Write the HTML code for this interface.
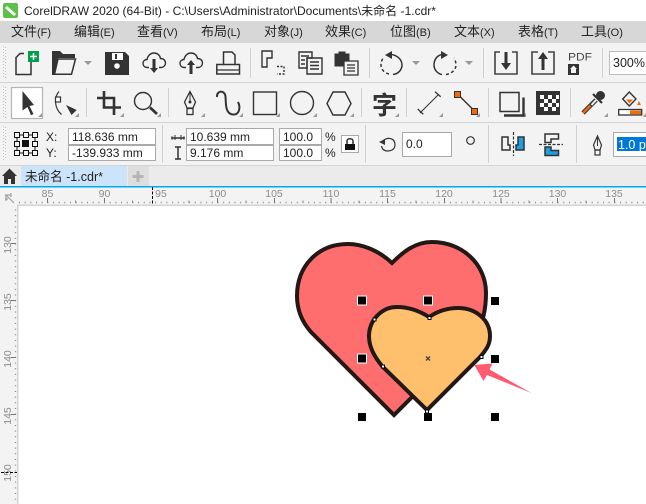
<!DOCTYPE html>
<html><head><meta charset="utf-8"><style>
html,body{margin:0;padding:0;background:#fff;overflow:hidden}
svg{display:block}
text{font-family:"Liberation Sans","Noto Sans CJK SC",sans-serif;fill:#222}
</style></head><body>
<svg width="646" height="504" viewBox="0 0 646 504" xmlns="http://www.w3.org/2000/svg">
<rect width="646" height="504" fill="#fff"/>
<!-- title -->
<rect x="3" y="3" width="15" height="15" rx="2" fill="#5cc04a"/>
<path d="M7 6l9 8-2 2-9-8z" fill="#fff"/>
<text x="24" y="15" font-size="12" textLength="412" lengthAdjust="spacingAndGlyphs" fill="#111">CorelDRAW 2020 (64-Bit) - C:\Users\Administrator\Documents\未命名 -1.cdr*</text>
<!-- menu -->
<rect y="21" width="646" height="22" fill="#d7d7d7"/>
<g font-size="13" fill="#111">
<text x="11" y="36">文件<tspan font-size="11">(F)</tspan></text>
<text x="74" y="36">编辑<tspan font-size="11">(E)</tspan></text>
<text x="137" y="36">查看<tspan font-size="11">(V)</tspan></text>
<text x="201" y="36">布局<tspan font-size="11">(L)</tspan></text>
<text x="264" y="36">对象<tspan font-size="11">(J)</tspan></text>
<text x="325" y="36">效果<tspan font-size="11">(C)</tspan></text>
<text x="390" y="36">位图<tspan font-size="11">(B)</tspan></text>
<text x="454" y="36">文本<tspan font-size="11">(X)</tspan></text>
<text x="518" y="36">表格<tspan font-size="11">(T)</tspan></text>
<text x="581" y="36">工具<tspan font-size="11">(O)</tspan></text>
</g>
<!-- bars -->
<rect y="43" width="646" height="122" fill="#f3f3f3"/>
<rect y="82" width="646" height="1" fill="#d4d4d4"/>
<rect y="122" width="646" height="1" fill="#d4d4d4"/>
<rect y="165" width="646" height="1" fill="#d4d4d4"/>
<g stroke="#c4c4c4" stroke-dasharray="1 2" stroke-width="1">
<path d="M3.500 46V78M5.500 47V78M3.500 86V118M5.500 87V118M3.500 126V160M5.500 127V160"/>
</g>
<g stroke="#d0d0d0" stroke-width="1">
<path d="M250.500 48V78M369.500 48V78M483.500 48V78M602.500 48V78"/>
<path d="M86.500 88V117M168.500 88V117M361.500 88V117M406.500 88V117M488.500 88V117M570.500 88V117"/>
<path d="M162.500 125V163M365.500 125V163M488.500 125V163M576.500 125V163"/>
</g>
<!-- toolbar1 icons -->
<g fill="none" stroke="#333" stroke-width="1.500">
<path d="M24 53.500H20L16 57.500V74.500H31V62"/>
</g>
<rect x="28" y="51" width="11" height="11" fill="#00a04a"/>
<path d="M33.500 53V60M30 56.500H37" stroke="#fff" stroke-width="1.500"/>
<path d="M52 75V51H60L63 54H75V58H58L54 75Z" fill="#333"/>
<path d="M58 59H75.500L71.500 74.200H54.500Z" fill="none" stroke="#333" stroke-width="1.500"/>
<path d="M84 61H92L88 65Z" fill="#999"/>
<path d="M105 52H125L129 56V75H105Z" fill="#333"/>
<rect x="112" y="53" width="11" height="7" fill="#fff"/><rect x="115" y="54" width="2" height="5" fill="#333"/>
<circle cx="117" cy="66" r="2.800" fill="#fff"/>
<g fill="none" stroke="#333" stroke-width="1.400">
<path d="M149 67.500H147C144 67.500 143 65 143 63C143 61 145 59.500 147 59.500C148 55 151 53 154 53C157 53 160 55 160.500 58.500C163.500 58.500 165.500 60.500 165.500 63C165.500 65.500 163.500 67.500 161 67.500H159"/>
<path d="M186 67.500H184C181 67.500 180 65 180 63C180 61 182 59.500 184 59.500C185 55 188 53 191 53C194 53 197 55 197.500 58.500C200.500 58.500 202.500 60.500 202.500 63C202.500 65.500 200.500 67.500 198 67.500H196"/>
</g>
<g fill="none" stroke="#333" stroke-width="1.500">
<path d="M216.800 74V64.500H223.500V52H232L235 55V64.500H239.500V74Z"/>
<path d="M217 70H239" stroke-width="1.200"/>
<path d="M223.500 64.500H235"/>
</g>
<path d="M152.500 59H155.500V68H158L154 73L150 68H152.500Z" fill="#333"/>
<path d="M189.500 74V65H187L191 60L195 65H192.500V74Z" fill="#333"/>
<g fill="none" stroke="#333" stroke-width="1.400">
<path d="M262 51H272V58H267V67H262Z"/>
<path d="M277 66.500H284V74H277" stroke-dasharray="2 1.500"/>
<path d="M299 52H312V58H307V68H299Z"/>
<path d="M307 58H322V74H307Z"/>
<path d="M310 62H319M310 65.500H319M310 69H319"/>
<path d="M301 56H309M301 60H305M301 64H305"/>
</g>
<path d="M335 54H339V52H345V54H349V66H335Z" fill="#333" stroke="#333"/>
<path d="M344 61H358V75H344Z" fill="#f3f3f3" stroke="#333" stroke-width="1.300"/>
<path d="M347 65H355M347 68H355M347 71H355" stroke="#333" stroke-width="1.200"/>
<g fill="none" stroke="#333" stroke-width="1.500">
<path d="M389 54.500C396 54 402 59 402 65C402 70 398 74 393 74.500"/>
<path d="M389 74C384 73 381 69 381 65C381 62 382 60 383 58" stroke-dasharray="3 2.500"/>
<path d="M443 54.500C437 54 433 59 433 65C433 70 437 74 441 74.500" transform="translate(1,0)"/>
<path d="M446 74.500C451 74 456 70 456 65C456 62 455 60 454 58" stroke-dasharray="3 2.500"/>
</g>
<path d="M392 51V59L385 55Z M441 51V59L448 55Z" fill="#333"/>
<path d="M412 61H420L416 65Z M465 61H473L469 65Z" fill="#999"/>
<g fill="none" stroke="#444" stroke-width="1.600">
<path d="M500 52H495V74H517V52H512"/>
<path d="M538 52H532V74H554V52H548"/>
</g>
<path d="M504.500 52H507.500V63H511L506 70L501 63H504.500Z" fill="#333"/>
<path d="M541.500 70V59H538L543 52L548 59H544.500V70Z" fill="#333"/>
<text x="568" y="60.700" font-size="11" textLength="24" style="fill:#444" lengthAdjust="spacingAndGlyphs">PDF</text>
<rect x="568" y="64" width="11" height="11" fill="#333"/><path d="M573.500 65.500L570 69H571V73H576V69H577Z" fill="#f3f3f3"/>
<rect x="609.500" y="51.500" width="40" height="23" fill="#fff" stroke="#bcbcbc"/>
<text x="613" y="67" font-size="12.500" fill="#111">300%</text>
<!-- toolbar2 -->
<rect x="11.500" y="87.500" width="31" height="31" fill="#fff" stroke="#b4b4b4" stroke-width="1.200"/>
<path d="M22.500 91L34 105L29.500 106L33.500 114L31 115.200L27.500 107L22.500 110.500Z" fill="#333"/>
<path d="M42 113V117H38Z M79 113V117H75Z M124 113V117H120Z M161 113V117H157Z M205 113V117H201Z M243 113V117H239Z M280 113V117H276Z M317 113V117H313Z M354 113V117H350Z M399 113V117H395Z M443 113V117H439Z M480 113V117H476Z M526 113V117H522Z M608 113V117H604Z M646 113V117H643Z" fill="#9a9a9a"/>
<path d="M59 91.500C54 97 54 108 61.500 114.500" fill="none" stroke="#333" stroke-width="1.200"/>
<rect x="55.500" y="97" width="5" height="5" fill="#fff" stroke="#333" stroke-width="1.200"/>
<path d="M66 105L76.700 110L71.500 115Z" fill="#333"/>
<path d="M104 91V107.500H121M97 98H114V115" fill="none" stroke="#333" stroke-width="2.600"/>
<circle cx="143" cy="101" r="8.500" fill="none" stroke="#333" stroke-width="1.400"/>
<path d="M150 107.500L157 114" stroke="#333" stroke-width="2.800"/>
<path d="M190 91.500L195.500 102L193 108H187L184.500 102Z" fill="none" stroke="#333" stroke-width="1.300"/>
<path d="M190 91.500V101" stroke="#333"/><circle cx="190" cy="102" r="1.500" fill="#333"/>
<rect x="187" y="108.500" width="6" height="6" fill="none" stroke="#333" stroke-width="1.300"/>
<path d="M217 97C216.500 90 225 90 225.500 96.500C226 103 225 114 233 114.500C239 115 241 108 238 102" fill="none" stroke="#333" stroke-width="2"/>
<rect x="253.500" y="92" width="23" height="22.500" fill="none" stroke="#333" stroke-width="1.400"/>
<circle cx="302" cy="103" r="11.500" fill="none" stroke="#333" stroke-width="1.400"/>
<path d="M333 92H345L351 103.500L345 115H333L327 103.500Z" fill="none" stroke="#333" stroke-width="1.400"/>
<text x="372" y="114" font-size="25" font-weight="700" style="fill:#333">字</text>
<path d="M420 113L438.500 94.500" stroke="#333" stroke-width="1.100"/>
<path d="M417.700 109L423.300 114.300M435 91.700L440.700 96.700" stroke="#333" stroke-width="1.300"/>
<path d="M458 94.500L474 110.500" stroke="#333" stroke-width="1.400"/>
<rect x="454.500" y="91.500" width="6" height="6" fill="#ee6a10" stroke="#333"/>
<rect x="471.500" y="108.500" width="6" height="6" fill="#ee6a10" stroke="#333"/>
<rect x="500" y="92.500" width="19" height="19" fill="none" stroke="#333" stroke-width="1.500"/>
<path d="M523.500 97.500V115.500H504" fill="none" stroke="#333" stroke-width="2.400"/>
<rect x="536" y="91" width="24" height="24" fill="#333"/>
<g fill="#fff"><rect x="540" y="95" width="4" height="4"/><rect x="548" y="95" width="4" height="4"/><rect x="556" y="95" width="3" height="4"/><rect x="544" y="99" width="4" height="4"/><rect x="552" y="99" width="4" height="4"/><rect x="540" y="103" width="4" height="4"/><rect x="548" y="103" width="4" height="4"/><rect x="556" y="103" width="3" height="4"/><rect x="544" y="107" width="4" height="4"/><rect x="552" y="107" width="4" height="4"/></g>
<path d="M583 113L596 100" stroke="#333" stroke-width="4.500"/>
<path d="M583 113L590.500 105.500" stroke="#ee6a10" stroke-width="2.500"/>
<path d="M591.500 105L596 100" stroke="#f3f3f3" stroke-width="2"/>
<circle cx="600.500" cy="95.500" r="4.500" fill="#333"/>
<path d="M593 94L602 103" stroke="#333" stroke-width="2.200"/>
<path d="M622.700 99L629.300 92L636 99L629.300 106Z" fill="#f3f3f3" stroke="#333" stroke-width="1.400"/>
<path d="M626 99.500H633L629.500 103.500Z" fill="#ee6a10"/>
<path d="M639 101L641 105H637Z" fill="#ee6a10"/>
<rect x="618.700" y="109.500" width="23" height="5.500" fill="#fff" stroke="#333" stroke-width="1.300"/>
<rect x="630" y="110.500" width="11" height="3.800" fill="#ee6a10"/>
<!-- prop bar -->
<g fill="none" stroke="#111" stroke-width="1">
<rect x="14.500" y="132.500" width="5" height="5"/><rect x="23.500" y="132.500" width="5" height="5"/><rect x="32.500" y="132.500" width="5" height="5"/>
<rect x="14.500" y="141.500" width="5" height="5"/><rect x="32.500" y="141.500" width="5" height="5"/>
<rect x="14.500" y="150.500" width="5" height="5"/><rect x="23.500" y="150.500" width="5" height="5"/><rect x="32.500" y="150.500" width="5" height="5"/>
<path d="M20 135H23M29 135H32M20 153H23M29 153H32M17 138V141M17 147V150M35 138V141M35 147V150"/>
</g>
<rect x="22" y="140" width="7" height="7" fill="#111"/>
<text x="46" y="141" font-size="12" fill="#222">X:</text>
<text x="46" y="157" font-size="12" fill="#222">Y:</text>
<g fill="#fff" stroke="#aaa">
<rect x="68.500" y="128.500" width="87" height="16"/><rect x="68.500" y="145.500" width="87" height="15"/>
<rect x="186.500" y="128.500" width="87" height="16"/><rect x="186.500" y="145.500" width="87" height="15"/>
<rect x="279.500" y="128.500" width="42" height="16"/><rect x="279.500" y="145.500" width="42" height="15"/>
<rect x="402.500" y="132.500" width="49" height="24"/>
<rect x="613.500" y="132.500" width="40" height="24"/>
</g>
<g font-size="12" fill="#111">
<text x="72" y="141">118.636 mm</text>
<text x="72" y="157">-139.933 mm</text>
<text x="190" y="141">10.639 mm</text>
<text x="190" y="157">9.176 mm</text>
<text x="283" y="141">100.0</text>
<text x="283" y="157">100.0</text>
<text x="325" y="141">%</text>
<text x="325" y="157">%</text>
<text x="406" y="148">0.0</text>
</g>
<path d="M172 136.500V139.500M184 136.500V139.500M172 138H184" stroke="#333" stroke-width="1.500"/>
<path d="M175 135V140M181 135V140" stroke="#333"/>
<path d="M175 147H181M175 159H181M178 147V159" stroke="#333" stroke-width="1.500"/>
<rect x="341.500" y="135.500" width="17" height="17" fill="#fff" stroke="#aaa"/>
<rect x="345" y="144" width="10" height="6" fill="#111"/>
<path d="M347 144V141C347 138 353 138 353 141V144" fill="none" stroke="#111" stroke-width="1.300"/>
<path d="M383 141C386 137 395 137 395 145C395 150 390 151 388 151C384 151 382 149 381.500 146" fill="none" stroke="#333" stroke-width="1.200"/>
<path d="M379 142L385 139L385 145Z" fill="#333"/>
<circle cx="470.500" cy="140.500" r="3.800" fill="none" stroke="#333" stroke-width="1.200"/>
<path d="M513.500 132V156" stroke="#333" stroke-dasharray="3 1.500" stroke-width="1.200"/>
<path d="M502 137H508V145H510V150H502Z" fill="#f3f3f3" stroke="#333" stroke-width="1.500"/>
<path d="M524 137H518V145H516V150H524Z" fill="#1ba0e2" stroke="#333" stroke-width="1.500"/>
<path d="M539 144.500H563" stroke="#333" stroke-dasharray="3 1.500" stroke-width="1.200"/>
<path d="M545 134H558.500V139H551V142.500H545Z" fill="#f3f3f3" stroke="#333" stroke-width="1.500"/>
<path d="M545 147H551V150.500H558.500V155.500H545Z" fill="#1ba0e2" stroke="#333" stroke-width="1.500"/>
<path d="M597.500 136L601.500 145L600 150H595L593.500 145Z" fill="none" stroke="#333" stroke-width="1.200"/>
<path d="M597.500 136V146" stroke="#333"/>
<rect x="595" y="150" width="5" height="5" fill="none" stroke="#333" stroke-width="1.200"/>
<rect x="617" y="137" width="29" height="14" fill="#0078d7"/>
<text x="618" y="149" font-size="12.500" style="fill:#fff">1.0 pt</text>
<!-- tabs -->
<rect y="166" width="646" height="20" fill="#ebebeb"/>
<path d="M2 176L9.500 168.500L17 176H15V184H11V179H8V184H4V176Z" fill="#333"/>
<rect x="21" y="166" width="106" height="20" fill="#cce4fa"/>
<text x="25" y="181" font-size="13" textLength="78" lengthAdjust="spacingAndGlyphs" fill="#111">未命名 -1.cdr*</text>
<rect x="128" y="166" width="21" height="20" fill="#dedede"/>
<path d="M138 171V182M132.500 176.500H143.500" stroke="#b5b5b5" stroke-width="3"/>
<rect y="186" width="646" height="1.500" fill="#00a8ef"/>
<!-- rulers -->
<rect y="187.500" width="646" height="17" fill="#f3f3f3"/>
<rect y="187.500" width="17.500" height="317" fill="#f3f3f3"/>
<rect x="17" y="204.500" width="629" height="1.500" fill="#d4d4d4"/>
<rect x="17" y="204.500" width="1.500" height="300" fill="#d4d4d4"/>
<path d="M6 195L14 203M5 195H11M6 195V201M11 193V197M8 199H5" stroke="#a0a0a0" stroke-width="1.200" fill="none"/>
<g font-size="10.500" text-anchor="middle">
<text x="47.500" y="197" style="fill:#8c8c8c">85</text>
<text x="104.500" y="197" style="fill:#8c8c8c">90</text>
<text x="161" y="197" style="fill:#8c8c8c">95</text>
<text x="217.500" y="197" style="fill:#8c8c8c">100</text>
<text x="274" y="197" style="fill:#8c8c8c">105</text>
<text x="331" y="197" style="fill:#8c8c8c">110</text>
<text x="387.500" y="197" style="fill:#8c8c8c">115</text>
<text x="444" y="197" style="fill:#8c8c8c">120</text>
<text x="501" y="197" style="fill:#8c8c8c">125</text>
<text x="557.500" y="197" style="fill:#8c8c8c">130</text>
<text x="614" y="197" style="fill:#8c8c8c">135</text>
</g>
<g font-size="10.500" text-anchor="middle">
<text transform="translate(11,245) rotate(-90)" style="fill:#8c8c8c">130</text>
<text transform="translate(11,302) rotate(-90)" style="fill:#8c8c8c">135</text>
<text transform="translate(11,359) rotate(-90)" style="fill:#8c8c8c">140</text>
<text transform="translate(11,416) rotate(-90)" style="fill:#8c8c8c">145</text>
<text transform="translate(11,473) rotate(-90)" style="fill:#8c8c8c">150</text>
</g>
<path d="M19 202.500H646" stroke="#8a8a8a" stroke-dasharray="1 4.670" stroke-width="1.400"/>
<path d="M47.500 198V203M104.500 198V203M217.500 198V203M274.500 198V203M331 198V203M387.500 198V203M444.500 198V203M501 198V203M557.500 198V203M614.500 198V203" stroke="#777"/>
<path d="M75.500 200.500V203M132.500 200.500V203M189 200.500V203M246 200.500V203M303 200.500V203M359 200.500V203M416 200.500V203M473 200.500V203M529 200.500V203M586 200.500V203" stroke="#8a8a8a"/>
<path d="M15.500 209.500V504" stroke="#8a8a8a" stroke-dasharray="1 4.670" stroke-width="1.400"/>
<path d="M11 243.500H16M11 300.500H16M11 357.500H16M11 414.500H16" stroke="#777"/>
<path d="M152.500 187V205" stroke="#000" stroke-dasharray="3 1.500"/>
<path d="M1 472.500H17" stroke="#000" stroke-dasharray="3 1.500"/>
<!-- hearts -->
<path d="M392 263C378 250 362 244 348 244C318 244 297 266 297 296C297 312 303 323 311 332L394 415L476 333C483 324 486 308 486 293C486 264 462 242 432 242C415 242 403 252 392 263Z" fill="#ff6e6e" stroke="#231815" stroke-width="4" stroke-linejoin="miter"/>
<path d="M429 317C418 310 407 307 397 307C380 307 369 322 369 336C369 347 374 356 382 366L427 410L480 357C487 349 490 344 490 336C490 320 476 308 458 308C448 308 438 311 429 317Z" fill="#ffc06e" stroke="#231815" stroke-width="4"/>
<path d="M474.300 365L492.500 363.500L489.500 369.500L531.500 393L487 375L483.500 381Z" fill="#ff5a6e"/>
<g fill="#000">
<rect x="357.500" y="296" width="9" height="9" stroke="#fff"/><rect x="423.500" y="296" width="9" height="9" stroke="#fff"/>
<rect x="491" y="297" width="8" height="8"/>
<rect x="357.500" y="354" width="9" height="9" stroke="#fff"/>
<rect x="491" y="355" width="8" height="8"/>
<rect x="358" y="413" width="8" height="8"/><rect x="424" y="413" width="8" height="8"/><rect x="491" y="413" width="8" height="8"/>
</g>
<g fill="#fff" stroke="#000" stroke-width="1">
<rect x="373" y="318" width="3" height="3"/><rect x="428" y="316.500" width="3" height="3"/>
<rect x="480" y="355.500" width="3" height="3"/><rect x="381.500" y="365" width="3" height="3"/><rect x="425.500" y="410" width="3" height="3"/>
</g>
<path d="M426 356.500L430 360.500M430 356.500L426 360.500" stroke="#444" stroke-width="1.300"/>
</svg>
</body></html>
